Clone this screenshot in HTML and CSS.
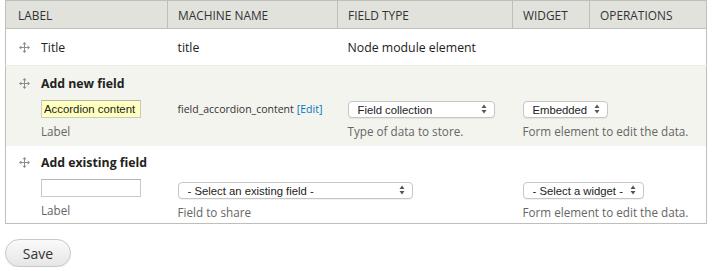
FILE: index.html
```html
<!DOCTYPE html>
<html>
<head>
<meta charset="utf-8">
<link rel="stylesheet" href="styles.css">
</head>
<body>
<div class="page">
<table class="fields">
  <colgroup>
    <col class="c1"><col class="c2"><col class="c3"><col class="c4"><col class="c5">
  </colgroup>
  <thead>
    <tr>
      <th>Label</th>
      <th>Machine name</th>
      <th>Field type</th>
      <th>Widget</th>
      <th>Operations</th>
    </tr>
  </thead>
  <tbody>
    <tr class="row-title">
      <td><span class="cell-label"><svg class="handle" viewBox="0 0 11 11" width="11" height="11"><path d="M5.5 1.5V9.5M1.5 5.5H9.5" stroke="#8c8c8c" stroke-width="1" fill="none"/><path d="M5.5 0L3.5 2.3H7.5Z M5.5 11L3.5 8.7H7.5Z M0 5.5L2.3 3.5V7.5Z M11 5.5L8.7 3.5V7.5Z" fill="#8c8c8c"/></svg>Title</span></td>
      <td>title</td>
      <td>Node module element</td>
      <td></td>
      <td></td>
    </tr>
    <tr class="row-add alt">
      <td>
        <div class="row-heading"><svg class="handle" viewBox="0 0 11 11" width="11" height="11"><path d="M5.5 1.5V9.5M1.5 5.5H9.5" stroke="#8c8c8c" stroke-width="1" fill="none"/><path d="M5.5 0L3.5 2.3H7.5Z M5.5 11L3.5 8.7H7.5Z M0 5.5L2.3 3.5V7.5Z M11 5.5L8.7 3.5V7.5Z" fill="#8c8c8c"/></svg>Add new field</div>
        <div class="item indent">
          <div class="control"><input class="text filled" type="text" value="Accordion content"></div>
          <div class="desc">Label</div>
        </div>
      </td>
      <td class="field-col">
        <div class="item">
          <div class="control machine">field_accordion_content <a href="#">[Edit]</a></div>
        </div>
      </td>
      <td class="field-col">
        <div class="item">
          <div class="control"><span class="select w-type"><select><option>Field collection</option></select><svg class="arrows" viewBox="0 0 6 10" width="6" height="10"><path d="M3 0.5L0.5 4H5.5Z M3 9.5L0.5 6H5.5Z" fill="#555"/></svg></span></div>
          <div class="desc">Type of data to store.</div>
        </div>
      </td>
      <td class="field-col wide" colspan="2">
        <div class="item">
          <div class="control"><span class="select w-embed"><select><option>Embedded</option></select><svg class="arrows" viewBox="0 0 6 10" width="6" height="10"><path d="M3 0.5L0.5 4H5.5Z M3 9.5L0.5 6H5.5Z" fill="#555"/></svg></span></div>
          <div class="desc">Form element to edit the data.</div>
        </div>
      </td>
    </tr>
    <tr class="row-add row-existing">
      <td>
        <div class="row-heading"><svg class="handle" viewBox="0 0 11 11" width="11" height="11"><path d="M5.5 1.5V9.5M1.5 5.5H9.5" stroke="#8c8c8c" stroke-width="1" fill="none"/><path d="M5.5 0L3.5 2.3H7.5Z M5.5 11L3.5 8.7H7.5Z M0 5.5L2.3 3.5V7.5Z M11 5.5L8.7 3.5V7.5Z" fill="#8c8c8c"/></svg>Add existing field</div>
        <div class="item indent">
          <div class="control"><input class="text" type="text" value=""></div>
          <div class="desc">Label</div>
        </div>
      </td>
      <td class="field-col" colspan="2">
        <div class="item">
          <div class="control"><span class="select w-existing"><select><option>- Select an existing field -</option></select><svg class="arrows" viewBox="0 0 6 10" width="6" height="10"><path d="M3 0.5L0.5 4H5.5Z M3 9.5L0.5 6H5.5Z" fill="#555"/></svg></span></div>
          <div class="desc">Field to share</div>
        </div>
      </td>
      <td class="field-col wide" colspan="2">
        <div class="item">
          <div class="control"><span class="select w-widget"><select><option>- Select a widget -</option></select><svg class="arrows" viewBox="0 0 6 10" width="6" height="10"><path d="M3 0.5L0.5 4H5.5Z M3 9.5L0.5 6H5.5Z" fill="#555"/></svg></span></div>
          <div class="desc">Form element to edit the data.</div>
        </div>
      </td>
    </tr>
  </tbody>
</table>
<div class="actions"><button class="btn" type="button">Save</button></div>
</div>
</body>
</html>
```

FILE: styles.css
```css
html, body {
  margin: 0;
  padding: 0;
  background: #fff;
}
body {
  font-family: "Open Sans", "DejaVu Sans", sans-serif;
  font-size: 12.3px;
  color: #222;
}
.page {
  padding: 0 0 0 5px;
}
.fields {
  border-collapse: collapse;
  table-layout: fixed;
  width: 701px;
  border: 1px solid #bebfb9;
}
.c1 { width: 162px; }
.c2 { width: 170px; }
.c3 { width: 175px; }
.c4 { width: 77px; }
.c5 { width: 117px; }
.fields th {
  background: #e1e2dc;
  border-bottom: 1px solid #bebfb9;
  border-left: 1px solid #bebfb9;
  text-transform: uppercase;
  font-weight: normal;
  font-size: 11.9px;
  color: #333;
  text-align: left;
  height: 27px;
  padding: 0 0 0 10px;
  vertical-align: middle;
}
.fields th:first-child {
  border-left: 0;
  padding-left: 12px;
}
.fields td {
  padding: 0 0 0 10px;
  vertical-align: top;
  text-align: left;
}
.fields td:first-child {
  padding-left: 13px;
}
.row-title td {
  height: 36px;
  vertical-align: middle;
  border-bottom: 1px solid #ecece6;
}
.cell-label, .row-heading {
  display: flex;
  align-items: center;
}
.handle {
  margin-right: 11px;
  flex: none;
}
.alt td {
  background: #f3f4ee;
}
.row-add td {
  padding-top: 9px;
  padding-bottom: 6px;
}
.row-heading {
  font-weight: bold;
  height: 17px;
  line-height: 17px;
}
.row-add .field-col {
  padding-top: 34px;
}
.row-existing td {
  padding-top: 8px;
  padding-bottom: 2px;
}
.row-existing .field-col {
  padding-top: 35px;
}
.item.indent {
  margin-left: 22px;
}
.row-add .item.indent {
  margin-top: 8px;
}
.control {
  height: 18px;
  display: flex;
  align-items: center;
}
.desc {
  margin-top: 5px;
  line-height: 17px;
  font-size: 11.7px;
  color: #666;
}
input.text {
  box-sizing: border-box;
  width: 100px;
  height: 18px;
  border: 1px solid #c9c9c9;
  border-top-color: #b4b4b4;
  padding: 0 2px;
  margin: 0;
  font-family: "Liberation Sans", Arial, sans-serif;
  font-size: 11.4px;
  color: #222;
  background: #fff;
  outline: none;
}
input.text.filled {
  background: #ffffbe;
}
.machine {
  font-size: 10.5px;
  color: #333;
  white-space: nowrap;
}
.machine a {
  color: #0074bd;
  text-decoration: none;
  margin-left: 3px;
}
.select {
  position: relative;
  display: inline-block;
  height: 17px;
}
.select select {
  appearance: none;
  -webkit-appearance: none;
  box-sizing: border-box;
  height: 17px;
  width: 100%;
  border: 1px solid #c6c6c6;
  border-radius: 4px;
  background: #fff;
  box-shadow: 0 1px 1px rgba(0,0,0,0.06);
  margin: 0;
  padding: 0 0 0 9px;
  font-family: "Liberation Sans", Arial, sans-serif;
  font-size: 11.3px;
  color: #222;
  outline: none;
}
.select .arrows {
  position: absolute;
  right: 8px;
  top: 3.5px;
  pointer-events: none;
}
.w-type { width: 147px; }
.w-embed { width: 85px; }
.w-existing { width: 235px; }
.w-widget { width: 121px; }
.actions {
  padding-top: 15px;
}
.btn {
  box-sizing: border-box;
  width: 66px;
  height: 28px;
  border: 1px solid #c8c8c8;
  border-radius: 14px;
  background: linear-gradient(#fafafa, #e6e6e6);
  font-family: "Open Sans", "DejaVu Sans", sans-serif;
  font-size: 14px;
  color: #333;
  padding: 0;
  box-shadow: 0 1px 1px rgba(0,0,0,0.08);
}
```
